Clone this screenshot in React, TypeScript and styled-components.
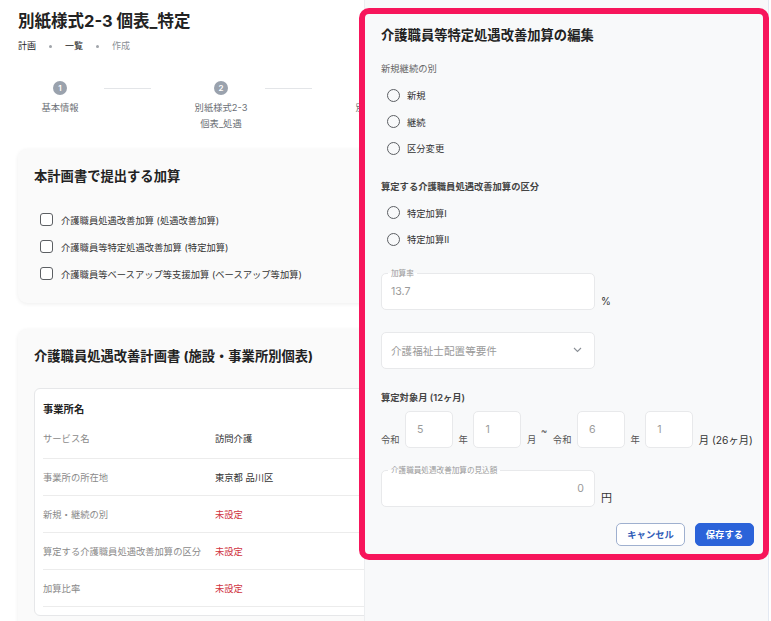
import React from "react";
import styled, { createGlobalStyle } from "styled-components";

const GlobalStyle = createGlobalStyle`
  html, body {
    margin: 0;
    padding: 0;
    background: #ffffff;
    font-family: "Inter", "Noto Sans CJK JP", sans-serif;
    color: #222;
  }
  * { box-sizing: border-box; }
`;

const Page = styled.div`
  padding: 9px 18px 0 18px;
  height: 621px;
  overflow: hidden;
`;

const Title = styled.h1`
  margin: 0;
  font-size: 16.5px;
  line-height: 24px;
  font-weight: 700;
  color: #222;
`;

const Breadcrumb = styled.div`
  margin-top: 6px;
  display: flex;
  align-items: center;
  gap: 9px;
  font-size: 9px;
  line-height: 14px;
`;

const Crumb = styled.span<{ muted?: boolean }>`
  color: ${(p) => (p.muted ? "#8a8f96" : "#222")};
`;

const Dot = styled.span`
  width: 3px;
  height: 3px;
  border-radius: 50%;
  background: #a0a4aa;
  margin: 0 4px;
`;

const Stepper = styled.div`
  margin-top: 28px;
  display: flex;
  align-items: flex-start;
`;

const Step = styled.div`
  width: 84px;
  display: flex;
  flex-direction: column;
  align-items: center;
  flex: none;
`;

const StepCircle = styled.div`
  width: 14px;
  height: 14px;
  border-radius: 50%;
  background: #9aa2ad;
  color: #fff;
  font-size: 8px;
  font-weight: 600;
  display: flex;
  align-items: center;
  justify-content: center;
`;

const StepLabel = styled.div`
  margin-top: 5px;
  font-size: 9.3px;
  line-height: 16px;
  color: #6b6f75;
  text-align: center;
`;

const Connector = styled.div`
  width: 47px;
  height: 1px;
  background: #e3e5e8;
  margin: 7px 28px 0 2px;
  flex: none;
`;

const Card = styled.section<{ top: number }>`
  margin-top: ${(p) => p.top}px;
  width: 735px;
  background: #fafafa;
  border-radius: 9px;
  box-shadow: 0 1px 4px rgba(0, 0, 0, 0.07);
  padding: 18px 16px 16px 16px;
`;

const CardTitle = styled.h2`
  margin: 0;
  font-size: 13.3px;
  line-height: 18px;
  font-weight: 700;
  color: #222;
`;

const CheckList = styled.div`
  margin-top: 21px;
  display: flex;
  flex-direction: column;
`;

const CheckRow = styled.label`
  height: 27px;
  display: flex;
  align-items: center;
  gap: 8px;
  padding-left: 6px;
  font-size: 9.3px;
  color: #333;
`;

const CheckBox = styled.span`
  width: 13px;
  height: 13px;
  border: 1.3px solid #5c5f63;
  border-radius: 3px;
  background: #fff;
`;

const TableBox = styled.div`
  margin-top: 23px;
  background: #fff;
  border: 1px solid #e6e7e9;
  border-radius: 6px;
  padding: 12px 8px 8px 8px;
`;

const TableHead = styled.div`
  font-size: 10.3px;
  font-weight: 700;
  line-height: 16px;
  color: #222;
`;

const Row = styled.div<{ first?: boolean }>`
  height: ${(p) => (p.first ? 42 : 37)}px;
  display: grid;
  grid-template-columns: 172px 1fr;
  align-items: center;
  border-bottom: 1px solid #ececec;
  font-size: 9.3px;
`;

const RowLabel = styled.span`
  color: #8a8a8a;
`;

const RowValue = styled.span<{ unset?: boolean }>`
  color: ${(p) => (p.unset ? "#d0343f" : "#333")};
`;

const Drawer = styled.aside`
  position: fixed;
  top: 0;
  bottom: 0;
  left: 364px;
  right: 2px;
  background: #f8f9fa;
  border-left: 1px solid #eceef0;
  border-right: 1px solid #e3e9f2;
`;

const Highlight = styled.div`
  margin: 8px -1px 0 -6px;
  border: 6px solid #f7155b;
  border-radius: 10px;
  padding: 11px 9px 8px 16px;
  background: #f8f9fa;
`;

const DrawerTitle = styled.h3`
  margin: 0;
  font-size: 13.3px;
  line-height: 20px;
  font-weight: 700;
  color: #222;
`;

const SectionLabel = styled.div<{ top: number; strong?: boolean }>`
  margin-top: ${(p) => p.top}px;
  font-size: 9.3px;
  line-height: 16px;
  color: ${(p) => (p.strong ? "#444" : "#666")};
  font-weight: ${(p) => (p.strong ? 600 : 400)};
`;

const RadioGroup = styled.div`
  margin-top: 5px;
  display: flex;
  flex-direction: column;
`;

const RadioRow = styled.label`
  height: 26.5px;
  display: flex;
  align-items: center;
  gap: 7px;
  padding-left: 6px;
  font-size: 9.3px;
  color: #333;
`;

const RadioCircle = styled.span`
  width: 13px;
  height: 13px;
  border-radius: 50%;
  border: 1.3px solid #5c5f63;
`;

const FieldRow = styled.div<{ top: number }>`
  margin-top: ${(p) => p.top}px;
  display: flex;
  align-items: flex-end;
  gap: 6px;
`;

const Outlined = styled.div<{ align?: string }>`
  position: relative;
  width: 214px;
  height: 37px;
  background: #fff;
  border: 1px solid #e8e9eb;
  border-radius: 5px;
  display: flex;
  align-items: center;
  justify-content: ${(p) => (p.align === "right" ? "flex-end" : "flex-start")};
  padding: 0 10px 0 9px;
  font-size: 10.6px;
  color: #9a9a9a;
`;

const Legend = styled.span`
  position: absolute;
  top: -5px;
  left: 6px;
  padding: 0 3px;
  font-size: 7.6px;
  line-height: 9px;
  color: #9a9a9a;
  background: linear-gradient(#f8f9fa 50%, #fff 50%);
`;

const Unit = styled.span<{ size?: number }>`
  font-size: ${(p) => p.size ?? 10}px;
  line-height: 14px;
  padding-bottom: 2px;
  color: #333;
`;

const SelectBox = styled(Outlined)`
  justify-content: space-between;
  padding-right: 12px;
`;

const MonthRow = styled.div`
  margin-top: 5px;
  display: flex;
  align-items: flex-end;
  gap: 5.5px;
  white-space: nowrap;
  & > * {
    flex: none;
  }
`;

const MonthLabel = styled.span`
  font-size: 9.3px;
  line-height: 14px;
  padding-bottom: 1px;
  color: #555;
`;

const Tilde = styled.span`
  font-size: 10px;
  color: #555;
  align-self: center;
  margin: 1px 0 0 -1px;
`;

const SmallInput = styled.div`
  width: 48px;
  height: 37px;
  background: #fff;
  border: 1px solid #e8e9eb;
  border-radius: 5px;
  display: flex;
  align-items: center;
  padding-left: 11px;
  font-size: 10.6px;
  color: #9a9a9a;
`;

const Total = styled.span`
  font-size: 10.3px;
  line-height: 14px;
  padding-bottom: 1px;
  color: #333;
`;

const Actions = styled.div`
  margin-top: 16px;
  display: flex;
  justify-content: flex-end;
  gap: 10px;
`;

const Button = styled.button<{ primary?: boolean }>`
  height: 23px;
  padding: 0 10px;
  border-radius: 5px;
  font-family: inherit;
  font-size: 9.3px;
  font-weight: 700;
  border: 1px solid ${(p) => (p.primary ? "#2b63d9" : "#9fb0cf")};
  background: ${(p) => (p.primary ? "#2b63d9" : "#fff")};
  color: ${(p) => (p.primary ? "#fff" : "#2f5bb7")};
`;

const Chevron = () => (
  <svg width="9" height="6" viewBox="0 0 9 6" fill="none">
    <path d="M1 1l3.5 3.5L8 1" stroke="#8a8f96" strokeWidth="1.1" />
  </svg>
);

const rows = [
  { label: "サービス名", value: "訪問介護" },
  { label: "事業所の所在地", value: "東京都 品川区" },
  { label: "新規・継続の別", value: "未設定", unset: true },
  { label: "算定する介護職員処遇改善加算の区分", value: "未設定", unset: true },
  { label: "加算比率", value: "未設定", unset: true },
];

export default function App() {
  return (
    <>
      <GlobalStyle />
      <Page>
        <Title>別紙様式2-3 個表_特定</Title>
        <Breadcrumb>
          <Crumb>計画</Crumb>
          <Dot />
          <Crumb>一覧</Crumb>
          <Dot />
          <Crumb muted>作成</Crumb>
        </Breadcrumb>

        <Stepper>
          <Step>
            <StepCircle>1</StepCircle>
            <StepLabel>基本情報</StepLabel>
          </Step>
          <Connector />
          <Step>
            <StepCircle>2</StepCircle>
            <StepLabel>
              別紙様式2-3
              <br />
              個表_処遇
            </StepLabel>
          </Step>
          <Connector />
          <Step>
            <StepCircle>3</StepCircle>
            <StepLabel>
              別紙様式2-3
              <br />
              個表_特定
            </StepLabel>
          </Step>
        </Stepper>

        <Card top={17}>
          <CardTitle>本計画書で提出する加算</CardTitle>
          <CheckList>
            <CheckRow>
              <CheckBox />
              介護職員処遇改善加算 (処遇改善加算)
            </CheckRow>
            <CheckRow>
              <CheckBox />
              介護職員等特定処遇改善加算 (特定加算)
            </CheckRow>
            <CheckRow>
              <CheckBox />
              介護職員等ベースアップ等支援加算 (ベースアップ等加算)
            </CheckRow>
          </CheckList>
        </Card>

        <Card top={26}>
          <CardTitle>介護職員処遇改善計画書 (施設・事業所別個表)</CardTitle>
          <TableBox>
            <TableHead>事業所名</TableHead>
            {rows.map((r, i) => (
              <Row key={r.label} first={i === 0}>
                <RowLabel>{r.label}</RowLabel>
                <RowValue unset={r.unset}>{r.value}</RowValue>
              </Row>
            ))}
          </TableBox>
        </Card>
      </Page>

      <Drawer>
        <Highlight>
          <DrawerTitle>介護職員等特定処遇改善加算の編集</DrawerTitle>

          <SectionLabel top={16}>新規継続の別</SectionLabel>
          <RadioGroup>
            <RadioRow>
              <RadioCircle />
              新規
            </RadioRow>
            <RadioRow>
              <RadioCircle />
              継続
            </RadioRow>
            <RadioRow>
              <RadioCircle />
              区分変更
            </RadioRow>
          </RadioGroup>

          <SectionLabel top={17} strong>
            算定する介護職員処遇改善加算の区分
          </SectionLabel>
          <RadioGroup>
            <RadioRow>
              <RadioCircle />
              特定加算I
            </RadioRow>
            <RadioRow>
              <RadioCircle />
              特定加算II
            </RadioRow>
          </RadioGroup>

          <FieldRow top={20}>
            <Outlined>
              <Legend>加算率</Legend>
              13.7
            </Outlined>
            <Unit>%</Unit>
          </FieldRow>

          <FieldRow top={22}>
            <SelectBox>
              介護福祉士配置等要件
              <Chevron />
            </SelectBox>
          </FieldRow>

          <SectionLabel top={21} strong>
            算定対象月 (12ヶ月)
          </SectionLabel>
          <MonthRow>
            <MonthLabel>令和</MonthLabel>
            <SmallInput>5</SmallInput>
            <MonthLabel>年</MonthLabel>
            <SmallInput>1</SmallInput>
            <MonthLabel>月</MonthLabel>
            <Tilde>~</Tilde>
            <MonthLabel>令和</MonthLabel>
            <SmallInput>6</SmallInput>
            <MonthLabel>年</MonthLabel>
            <SmallInput>1</SmallInput>
            <Total>月 (26ヶ月)</Total>
          </MonthRow>

          <FieldRow top={22}>
            <Outlined align="right">
              <Legend>介護職員処遇改善加算の見込額</Legend>
              0
            </Outlined>
            <Unit size={11}>円</Unit>
          </FieldRow>

          <Actions>
            <Button>キャンセル</Button>
            <Button primary>保存する</Button>
          </Actions>
        </Highlight>
      </Drawer>
    </>
  );
}
